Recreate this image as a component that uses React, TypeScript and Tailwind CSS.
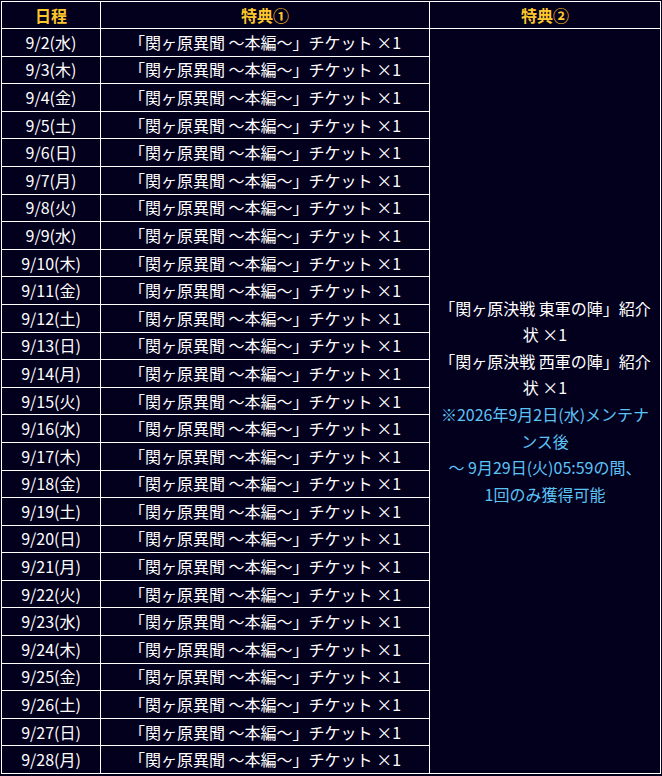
const days = [
  "9/2(水)", "9/3(木)", "9/4(金)", "9/5(土)", "9/6(日)", "9/7(月)", "9/8(火)",
  "9/9(水)", "9/10(木)", "9/11(金)", "9/12(土)", "9/13(日)", "9/14(月)", "9/15(火)",
  "9/16(水)", "9/17(木)", "9/18(金)", "9/19(土)", "9/20(日)", "9/21(月)", "9/22(火)",
  "9/23(水)", "9/24(木)", "9/25(金)", "9/26(土)", "9/27(日)", "9/28(月)",
];

export default function App() {
  return (
    <div className="min-h-[776px] w-[662px] bg-[#03001e] pl-px pt-px text-white [font-family:'Noto_Sans_CJK_JP',sans-serif] text-[16px]">
      <table className="w-[659px] border-collapse table-fixed">
        <colgroup>
          <col className="w-[99px]" />
          <col className="w-[329px]" />
          <col className="w-[231px]" />
        </colgroup>
        <thead>
          <tr className="h-[27px]">
            <th className="border border-white p-0 font-bold text-[#fcc72c] leading-[25px]">日程</th>
            <th className="border border-white p-0 font-bold text-[#fcc72c] leading-[25px]">特典①</th>
            <th className="border border-white p-0 font-bold text-[#fcc72c] leading-[25px]">特典②</th>
          </tr>
        </thead>
        <tbody>
          {days.map((d, i) => (
            <tr key={d} className="h-[27.6px]">
              <td className="border border-white p-0 text-center leading-[25px]">{d}</td>
              <td className="border border-white p-0 text-center leading-[25px]">
                「関ヶ原異聞 ～本編～」チケット ×1
              </td>
              {i === 0 && (
                <td rowSpan={27} className="border border-white px-1 text-center align-middle leading-[26.6px]">
                  「関ヶ原決戦 東軍の陣」紹介<br />
                  状 ×1<br />
                  「関ヶ原決戦 西軍の陣」紹介<br />
                  状 ×1<br />
                  <span className="text-[#5cc3f5]">
                    ※2026年9月2日(水)メンテナ<br />
                    ンス後<br />
                    ～ 9月29日(火)05:59の間、<br />
                    1回のみ獲得可能
                  </span>
                </td>
              )}
            </tr>
          ))}
        </tbody>
      </table>
    </div>
  );
}
